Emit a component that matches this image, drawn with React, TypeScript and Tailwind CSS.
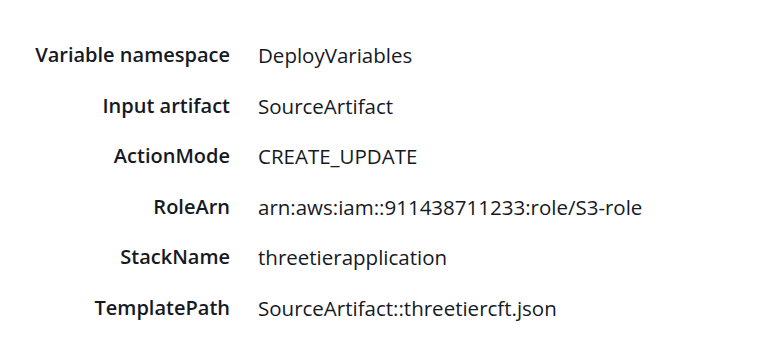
const rows: [string, string][] = [
  ["Variable namespace", "DeployVariables"],
  ["Input artifact", "SourceArtifact"],
  ["ActionMode", "CREATE_UPDATE"],
  ["RoleArn", "arn:aws:iam::911438711233:role/S3-role"],
  ["StackName", "threetierapplication"],
  ["TemplatePath", "SourceArtifact::threetiercft.json"],
];

export default function App() {
  return (
    <div
      className="w-[758px] h-[353px] bg-white text-[#16191f] pt-[40px]"
      style={{ fontFamily: '"Open Sans", "Noto Sans", sans-serif' }}
    >
      <div className="grid grid-cols-[230px_1fr] gap-x-[28px] gap-y-[20.6px] text-[20px] leading-[30px]">
        {rows.map(([k, v]) => (
          <div key={k} className="contents">
            <div className="text-right font-semibold">{k}</div>
            <div className="text-[20.5px]">{v}</div>
          </div>
        ))}
      </div>
    </div>
  );
}
